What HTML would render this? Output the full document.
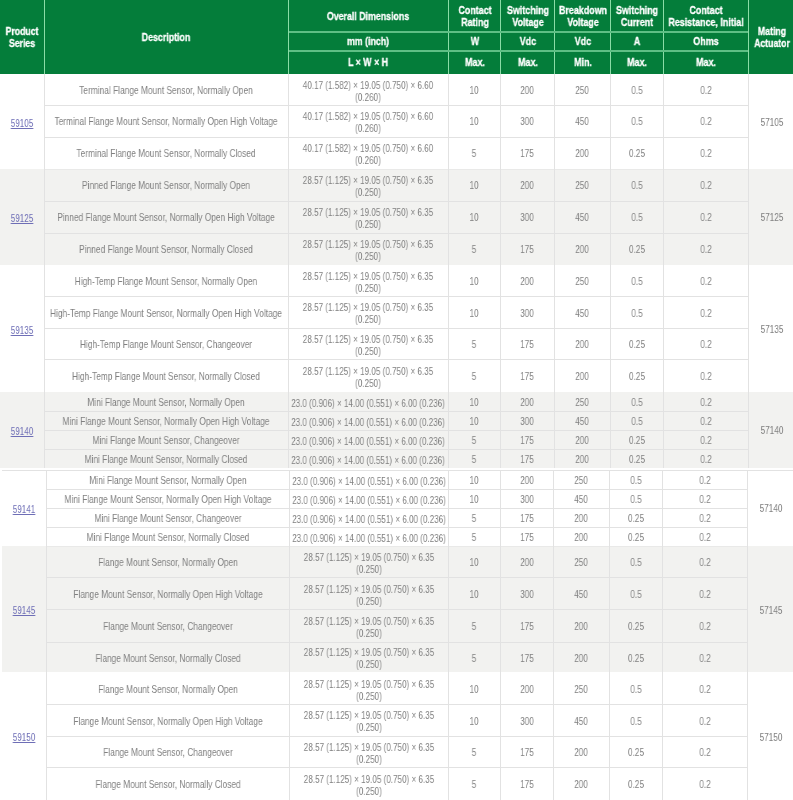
<!DOCTYPE html>
<html><head><meta charset="utf-8"><style>
html,body{margin:0;padding:0}
body{width:793px;height:800px;overflow:hidden;position:relative;background:#fff;font-family:"Liberation Sans",sans-serif}
body>div{position:absolute}
.t{text-align:center;white-space:nowrap;transform-origin:50% 50%;will-change:transform}
</style></head><body>
<div style="left:0px;top:0px;width:793px;height:74px;background:#047d3a"></div>
<div style="left:44px;top:0px;width:1px;height:74px;background:#8bdca6"></div>
<div style="left:288px;top:0px;width:1px;height:74px;background:#8bdca6"></div>
<div style="left:448px;top:0px;width:1px;height:74px;background:#8bdca6"></div>
<div style="left:500px;top:0px;width:1px;height:74px;background:#8bdca6"></div>
<div style="left:554px;top:0px;width:1px;height:74px;background:#8bdca6"></div>
<div style="left:610px;top:0px;width:1px;height:74px;background:#8bdca6"></div>
<div style="left:663px;top:0px;width:1px;height:74px;background:#8bdca6"></div>
<div style="left:748px;top:0px;width:1px;height:74px;background:#8bdca6"></div>
<div style="left:289px;top:31px;width:459px;height:2px;background:#5fbf85"></div>
<div style="left:289px;top:50px;width:459px;height:2px;background:#5fbf85"></div>
<div class="t" style="left:-178.00px;top:24.70px;width:400px;height:24.60px;font-size:10.5px;line-height:12.3px;color:#ffffff;transform:scaleX(0.83);font-weight:bold;-webkit-text-stroke:0.3px #fff">Product<br>Series</div>
<div class="t" style="left:-34.00px;top:30.85px;width:400px;height:12.30px;font-size:10.5px;line-height:12.3px;color:#ffffff;transform:scaleX(0.84);font-weight:bold;-webkit-text-stroke:0.3px #fff">Description</div>
<div class="t" style="left:168.00px;top:9.85px;width:400px;height:12.30px;font-size:10.5px;line-height:12.3px;color:#ffffff;transform:scaleX(0.84);font-weight:bold;-webkit-text-stroke:0.3px #fff">Overall Dimensions</div>
<div class="t" style="left:168.00px;top:34.85px;width:400px;height:12.30px;font-size:10.5px;line-height:12.3px;color:#ffffff;transform:scaleX(0.84);font-weight:bold;-webkit-text-stroke:0.3px #fff">mm (inch)</div>
<div class="t" style="left:168.00px;top:56.35px;width:400px;height:12.30px;font-size:10.5px;line-height:12.3px;color:#ffffff;transform:scaleX(0.84);font-weight:bold;-webkit-text-stroke:0.3px #fff">L × W × H</div>
<div class="t" style="left:274.50px;top:4.30px;width:400px;height:24.60px;font-size:10.5px;line-height:12.3px;color:#ffffff;transform:scaleX(0.85);font-weight:bold;-webkit-text-stroke:0.3px #fff">Contact<br>Rating</div>
<div class="t" style="left:274.50px;top:35.05px;width:400px;height:12.30px;font-size:10.5px;line-height:12.3px;color:#ffffff;transform:scaleX(0.85);font-weight:bold;-webkit-text-stroke:0.3px #fff">W</div>
<div class="t" style="left:274.50px;top:56.35px;width:400px;height:12.30px;font-size:10.5px;line-height:12.3px;color:#ffffff;transform:scaleX(0.85);font-weight:bold;-webkit-text-stroke:0.3px #fff">Max.</div>
<div class="t" style="left:327.50px;top:4.30px;width:400px;height:24.60px;font-size:10.5px;line-height:12.3px;color:#ffffff;transform:scaleX(0.85);font-weight:bold;-webkit-text-stroke:0.3px #fff">Switching<br>Voltage</div>
<div class="t" style="left:327.50px;top:35.05px;width:400px;height:12.30px;font-size:10.5px;line-height:12.3px;color:#ffffff;transform:scaleX(0.85);font-weight:bold;-webkit-text-stroke:0.3px #fff">Vdc</div>
<div class="t" style="left:327.50px;top:56.35px;width:400px;height:12.30px;font-size:10.5px;line-height:12.3px;color:#ffffff;transform:scaleX(0.85);font-weight:bold;-webkit-text-stroke:0.3px #fff">Max.</div>
<div class="t" style="left:382.50px;top:4.30px;width:400px;height:24.60px;font-size:10.5px;line-height:12.3px;color:#ffffff;transform:scaleX(0.85);font-weight:bold;-webkit-text-stroke:0.3px #fff">Breakdown<br>Voltage</div>
<div class="t" style="left:382.50px;top:35.05px;width:400px;height:12.30px;font-size:10.5px;line-height:12.3px;color:#ffffff;transform:scaleX(0.85);font-weight:bold;-webkit-text-stroke:0.3px #fff">Vdc</div>
<div class="t" style="left:382.50px;top:56.35px;width:400px;height:12.30px;font-size:10.5px;line-height:12.3px;color:#ffffff;transform:scaleX(0.85);font-weight:bold;-webkit-text-stroke:0.3px #fff">Min.</div>
<div class="t" style="left:437.00px;top:4.30px;width:400px;height:24.60px;font-size:10.5px;line-height:12.3px;color:#ffffff;transform:scaleX(0.85);font-weight:bold;-webkit-text-stroke:0.3px #fff">Switching<br>Current</div>
<div class="t" style="left:437.00px;top:35.05px;width:400px;height:12.30px;font-size:10.5px;line-height:12.3px;color:#ffffff;transform:scaleX(0.85);font-weight:bold;-webkit-text-stroke:0.3px #fff">A</div>
<div class="t" style="left:437.00px;top:56.35px;width:400px;height:12.30px;font-size:10.5px;line-height:12.3px;color:#ffffff;transform:scaleX(0.85);font-weight:bold;-webkit-text-stroke:0.3px #fff">Max.</div>
<div class="t" style="left:506.00px;top:4.30px;width:400px;height:24.60px;font-size:10.5px;line-height:12.3px;color:#ffffff;transform:scaleX(0.85);font-weight:bold;-webkit-text-stroke:0.3px #fff">Contact<br>Resistance, Initial</div>
<div class="t" style="left:506.00px;top:35.05px;width:400px;height:12.30px;font-size:10.5px;line-height:12.3px;color:#ffffff;transform:scaleX(0.85);font-weight:bold;-webkit-text-stroke:0.3px #fff">Ohms</div>
<div class="t" style="left:506.00px;top:56.35px;width:400px;height:12.30px;font-size:10.5px;line-height:12.3px;color:#ffffff;transform:scaleX(0.85);font-weight:bold;-webkit-text-stroke:0.3px #fff">Max.</div>
<div class="t" style="left:571.70px;top:24.70px;width:400px;height:24.60px;font-size:10.5px;line-height:12.3px;color:#ffffff;transform:scaleX(0.83);font-weight:bold;-webkit-text-stroke:0.3px #fff">Mating<br>Actuator</div>
<div style="left:0px;top:169px;width:793px;height:96px;background:#f2f2f0"></div>
<div style="left:0px;top:392px;width:793px;height:76px;background:#f2f2f0"></div>
<div style="left:2px;top:546px;width:791px;height:126px;background:#f2f2f0"></div>
<div style="left:44px;top:74px;width:1px;height:95px;background:#e2e2e2"></div>
<div style="left:288px;top:74px;width:1px;height:95px;background:#e2e2e2"></div>
<div style="left:448px;top:74px;width:1px;height:95px;background:#e2e2e2"></div>
<div style="left:500px;top:74px;width:1px;height:95px;background:#e2e2e2"></div>
<div style="left:554px;top:74px;width:1px;height:95px;background:#e2e2e2"></div>
<div style="left:610px;top:74px;width:1px;height:95px;background:#e2e2e2"></div>
<div style="left:663px;top:74px;width:1px;height:95px;background:#e2e2e2"></div>
<div style="left:748px;top:74px;width:1px;height:95px;background:#e2e2e2"></div>
<div style="left:44px;top:105px;width:704px;height:1px;background:#e2e2e2"></div>
<div style="left:44px;top:137px;width:704px;height:1px;background:#e2e2e2"></div>
<div style="left:44px;top:169px;width:704px;height:1px;background:#e9e9e8"></div>
<div class="t" style="left:-178.00px;top:117.72px;width:400px;height:11.55px;font-size:10.5px;line-height:11.55px;color:#6e6eb6;transform:scaleX(0.77);text-decoration:underline">59105</div>
<div class="t" style="left:571.50px;top:116.92px;width:400px;height:11.55px;font-size:10.5px;line-height:11.55px;color:#808080;transform:scaleX(0.78)">57105</div>
<div class="t" style="left:-34.00px;top:84.92px;width:400px;height:11.55px;font-size:10.5px;line-height:11.55px;color:#808080;transform:scaleX(0.795)">Terminal Flange Mount Sensor, Normally Open</div>
<div class="t" style="left:168.00px;top:78.70px;width:400px;height:24.00px;font-size:10.5px;line-height:12px;color:#808080;transform:scaleX(0.77)">40.17 (1.582) × 19.05 (0.750) × 6.60<br>(0.260)</div>
<div class="t" style="left:274.00px;top:84.92px;width:400px;height:11.55px;font-size:10.5px;line-height:11.55px;color:#808080;transform:scaleX(0.78)">10</div>
<div class="t" style="left:327.00px;top:84.92px;width:400px;height:11.55px;font-size:10.5px;line-height:11.55px;color:#808080;transform:scaleX(0.78)">200</div>
<div class="t" style="left:382.00px;top:84.92px;width:400px;height:11.55px;font-size:10.5px;line-height:11.55px;color:#808080;transform:scaleX(0.78)">250</div>
<div class="t" style="left:436.50px;top:84.92px;width:400px;height:11.55px;font-size:10.5px;line-height:11.55px;color:#808080;transform:scaleX(0.78)">0.5</div>
<div class="t" style="left:505.50px;top:84.92px;width:400px;height:11.55px;font-size:10.5px;line-height:11.55px;color:#808080;transform:scaleX(0.78)">0.2</div>
<div class="t" style="left:-34.00px;top:116.42px;width:400px;height:11.55px;font-size:10.5px;line-height:11.55px;color:#808080;transform:scaleX(0.795)">Terminal Flange Mount Sensor, Normally Open High Voltage</div>
<div class="t" style="left:168.00px;top:110.20px;width:400px;height:24.00px;font-size:10.5px;line-height:12px;color:#808080;transform:scaleX(0.77)">40.17 (1.582) × 19.05 (0.750) × 6.60<br>(0.260)</div>
<div class="t" style="left:274.00px;top:116.42px;width:400px;height:11.55px;font-size:10.5px;line-height:11.55px;color:#808080;transform:scaleX(0.78)">10</div>
<div class="t" style="left:327.00px;top:116.42px;width:400px;height:11.55px;font-size:10.5px;line-height:11.55px;color:#808080;transform:scaleX(0.78)">300</div>
<div class="t" style="left:382.00px;top:116.42px;width:400px;height:11.55px;font-size:10.5px;line-height:11.55px;color:#808080;transform:scaleX(0.78)">450</div>
<div class="t" style="left:436.50px;top:116.42px;width:400px;height:11.55px;font-size:10.5px;line-height:11.55px;color:#808080;transform:scaleX(0.78)">0.5</div>
<div class="t" style="left:505.50px;top:116.42px;width:400px;height:11.55px;font-size:10.5px;line-height:11.55px;color:#808080;transform:scaleX(0.78)">0.2</div>
<div class="t" style="left:-34.00px;top:148.42px;width:400px;height:11.55px;font-size:10.5px;line-height:11.55px;color:#808080;transform:scaleX(0.795)">Terminal Flange Mount Sensor, Normally Closed</div>
<div class="t" style="left:168.00px;top:142.20px;width:400px;height:24.00px;font-size:10.5px;line-height:12px;color:#808080;transform:scaleX(0.77)">40.17 (1.582) × 19.05 (0.750) × 6.60<br>(0.260)</div>
<div class="t" style="left:274.00px;top:148.42px;width:400px;height:11.55px;font-size:10.5px;line-height:11.55px;color:#808080;transform:scaleX(0.78)">5</div>
<div class="t" style="left:327.00px;top:148.42px;width:400px;height:11.55px;font-size:10.5px;line-height:11.55px;color:#808080;transform:scaleX(0.78)">175</div>
<div class="t" style="left:382.00px;top:148.42px;width:400px;height:11.55px;font-size:10.5px;line-height:11.55px;color:#808080;transform:scaleX(0.78)">200</div>
<div class="t" style="left:436.50px;top:148.42px;width:400px;height:11.55px;font-size:10.5px;line-height:11.55px;color:#808080;transform:scaleX(0.78)">0.25</div>
<div class="t" style="left:505.50px;top:148.42px;width:400px;height:11.55px;font-size:10.5px;line-height:11.55px;color:#808080;transform:scaleX(0.78)">0.2</div>
<div style="left:44px;top:169px;width:1px;height:96px;background:#e2e2e2"></div>
<div style="left:288px;top:169px;width:1px;height:96px;background:#e2e2e2"></div>
<div style="left:448px;top:169px;width:1px;height:96px;background:#e2e2e2"></div>
<div style="left:500px;top:169px;width:1px;height:96px;background:#e2e2e2"></div>
<div style="left:554px;top:169px;width:1px;height:96px;background:#e2e2e2"></div>
<div style="left:610px;top:169px;width:1px;height:96px;background:#e2e2e2"></div>
<div style="left:663px;top:169px;width:1px;height:96px;background:#e2e2e2"></div>
<div style="left:748px;top:169px;width:1px;height:96px;background:#e2e2e2"></div>
<div style="left:44px;top:201px;width:704px;height:1px;background:#e2e2e2"></div>
<div style="left:44px;top:233px;width:704px;height:1px;background:#e2e2e2"></div>
<div class="t" style="left:-178.00px;top:213.22px;width:400px;height:11.55px;font-size:10.5px;line-height:11.55px;color:#6e6eb6;transform:scaleX(0.77);text-decoration:underline">59125</div>
<div class="t" style="left:571.50px;top:212.42px;width:400px;height:11.55px;font-size:10.5px;line-height:11.55px;color:#808080;transform:scaleX(0.78)">57125</div>
<div class="t" style="left:-34.00px;top:180.42px;width:400px;height:11.55px;font-size:10.5px;line-height:11.55px;color:#808080;transform:scaleX(0.795)">Pinned Flange Mount Sensor, Normally Open</div>
<div class="t" style="left:168.00px;top:174.20px;width:400px;height:24.00px;font-size:10.5px;line-height:12px;color:#808080;transform:scaleX(0.77)">28.57 (1.125) × 19.05 (0.750) × 6.35<br>(0.250)</div>
<div class="t" style="left:274.00px;top:180.42px;width:400px;height:11.55px;font-size:10.5px;line-height:11.55px;color:#808080;transform:scaleX(0.78)">10</div>
<div class="t" style="left:327.00px;top:180.42px;width:400px;height:11.55px;font-size:10.5px;line-height:11.55px;color:#808080;transform:scaleX(0.78)">200</div>
<div class="t" style="left:382.00px;top:180.42px;width:400px;height:11.55px;font-size:10.5px;line-height:11.55px;color:#808080;transform:scaleX(0.78)">250</div>
<div class="t" style="left:436.50px;top:180.42px;width:400px;height:11.55px;font-size:10.5px;line-height:11.55px;color:#808080;transform:scaleX(0.78)">0.5</div>
<div class="t" style="left:505.50px;top:180.42px;width:400px;height:11.55px;font-size:10.5px;line-height:11.55px;color:#808080;transform:scaleX(0.78)">0.2</div>
<div class="t" style="left:-34.00px;top:212.42px;width:400px;height:11.55px;font-size:10.5px;line-height:11.55px;color:#808080;transform:scaleX(0.795)">Pinned Flange Mount Sensor, Normally Open High Voltage</div>
<div class="t" style="left:168.00px;top:206.20px;width:400px;height:24.00px;font-size:10.5px;line-height:12px;color:#808080;transform:scaleX(0.77)">28.57 (1.125) × 19.05 (0.750) × 6.35<br>(0.250)</div>
<div class="t" style="left:274.00px;top:212.42px;width:400px;height:11.55px;font-size:10.5px;line-height:11.55px;color:#808080;transform:scaleX(0.78)">10</div>
<div class="t" style="left:327.00px;top:212.42px;width:400px;height:11.55px;font-size:10.5px;line-height:11.55px;color:#808080;transform:scaleX(0.78)">300</div>
<div class="t" style="left:382.00px;top:212.42px;width:400px;height:11.55px;font-size:10.5px;line-height:11.55px;color:#808080;transform:scaleX(0.78)">450</div>
<div class="t" style="left:436.50px;top:212.42px;width:400px;height:11.55px;font-size:10.5px;line-height:11.55px;color:#808080;transform:scaleX(0.78)">0.5</div>
<div class="t" style="left:505.50px;top:212.42px;width:400px;height:11.55px;font-size:10.5px;line-height:11.55px;color:#808080;transform:scaleX(0.78)">0.2</div>
<div class="t" style="left:-34.00px;top:244.42px;width:400px;height:11.55px;font-size:10.5px;line-height:11.55px;color:#808080;transform:scaleX(0.795)">Pinned Flange Mount Sensor, Normally Closed</div>
<div class="t" style="left:168.00px;top:238.20px;width:400px;height:24.00px;font-size:10.5px;line-height:12px;color:#808080;transform:scaleX(0.77)">28.57 (1.125) × 19.05 (0.750) × 6.35<br>(0.250)</div>
<div class="t" style="left:274.00px;top:244.42px;width:400px;height:11.55px;font-size:10.5px;line-height:11.55px;color:#808080;transform:scaleX(0.78)">5</div>
<div class="t" style="left:327.00px;top:244.42px;width:400px;height:11.55px;font-size:10.5px;line-height:11.55px;color:#808080;transform:scaleX(0.78)">175</div>
<div class="t" style="left:382.00px;top:244.42px;width:400px;height:11.55px;font-size:10.5px;line-height:11.55px;color:#808080;transform:scaleX(0.78)">200</div>
<div class="t" style="left:436.50px;top:244.42px;width:400px;height:11.55px;font-size:10.5px;line-height:11.55px;color:#808080;transform:scaleX(0.78)">0.25</div>
<div class="t" style="left:505.50px;top:244.42px;width:400px;height:11.55px;font-size:10.5px;line-height:11.55px;color:#808080;transform:scaleX(0.78)">0.2</div>
<div style="left:44px;top:265px;width:1px;height:127px;background:#e2e2e2"></div>
<div style="left:288px;top:265px;width:1px;height:127px;background:#e2e2e2"></div>
<div style="left:448px;top:265px;width:1px;height:127px;background:#e2e2e2"></div>
<div style="left:500px;top:265px;width:1px;height:127px;background:#e2e2e2"></div>
<div style="left:554px;top:265px;width:1px;height:127px;background:#e2e2e2"></div>
<div style="left:610px;top:265px;width:1px;height:127px;background:#e2e2e2"></div>
<div style="left:663px;top:265px;width:1px;height:127px;background:#e2e2e2"></div>
<div style="left:748px;top:265px;width:1px;height:127px;background:#e2e2e2"></div>
<div style="left:44px;top:296px;width:704px;height:1px;background:#e2e2e2"></div>
<div style="left:44px;top:328px;width:704px;height:1px;background:#e2e2e2"></div>
<div style="left:44px;top:359px;width:704px;height:1px;background:#e2e2e2"></div>
<div class="t" style="left:-178.00px;top:324.73px;width:400px;height:11.55px;font-size:10.5px;line-height:11.55px;color:#6e6eb6;transform:scaleX(0.77);text-decoration:underline">59135</div>
<div class="t" style="left:571.50px;top:323.93px;width:400px;height:11.55px;font-size:10.5px;line-height:11.55px;color:#808080;transform:scaleX(0.78)">57135</div>
<div class="t" style="left:-34.00px;top:276.18px;width:400px;height:11.55px;font-size:10.5px;line-height:11.55px;color:#808080;transform:scaleX(0.795)">High-Temp Flange Mount Sensor, Normally Open</div>
<div class="t" style="left:168.00px;top:269.95px;width:400px;height:24.00px;font-size:10.5px;line-height:12px;color:#808080;transform:scaleX(0.77)">28.57 (1.125) × 19.05 (0.750) × 6.35<br>(0.250)</div>
<div class="t" style="left:274.00px;top:276.18px;width:400px;height:11.55px;font-size:10.5px;line-height:11.55px;color:#808080;transform:scaleX(0.78)">10</div>
<div class="t" style="left:327.00px;top:276.18px;width:400px;height:11.55px;font-size:10.5px;line-height:11.55px;color:#808080;transform:scaleX(0.78)">200</div>
<div class="t" style="left:382.00px;top:276.18px;width:400px;height:11.55px;font-size:10.5px;line-height:11.55px;color:#808080;transform:scaleX(0.78)">250</div>
<div class="t" style="left:436.50px;top:276.18px;width:400px;height:11.55px;font-size:10.5px;line-height:11.55px;color:#808080;transform:scaleX(0.78)">0.5</div>
<div class="t" style="left:505.50px;top:276.18px;width:400px;height:11.55px;font-size:10.5px;line-height:11.55px;color:#808080;transform:scaleX(0.78)">0.2</div>
<div class="t" style="left:-34.00px;top:307.68px;width:400px;height:11.55px;font-size:10.5px;line-height:11.55px;color:#808080;transform:scaleX(0.795)">High-Temp Flange Mount Sensor, Normally Open High Voltage</div>
<div class="t" style="left:168.00px;top:301.45px;width:400px;height:24.00px;font-size:10.5px;line-height:12px;color:#808080;transform:scaleX(0.77)">28.57 (1.125) × 19.05 (0.750) × 6.35<br>(0.250)</div>
<div class="t" style="left:274.00px;top:307.68px;width:400px;height:11.55px;font-size:10.5px;line-height:11.55px;color:#808080;transform:scaleX(0.78)">10</div>
<div class="t" style="left:327.00px;top:307.68px;width:400px;height:11.55px;font-size:10.5px;line-height:11.55px;color:#808080;transform:scaleX(0.78)">300</div>
<div class="t" style="left:382.00px;top:307.68px;width:400px;height:11.55px;font-size:10.5px;line-height:11.55px;color:#808080;transform:scaleX(0.78)">450</div>
<div class="t" style="left:436.50px;top:307.68px;width:400px;height:11.55px;font-size:10.5px;line-height:11.55px;color:#808080;transform:scaleX(0.78)">0.5</div>
<div class="t" style="left:505.50px;top:307.68px;width:400px;height:11.55px;font-size:10.5px;line-height:11.55px;color:#808080;transform:scaleX(0.78)">0.2</div>
<div class="t" style="left:-34.00px;top:339.18px;width:400px;height:11.55px;font-size:10.5px;line-height:11.55px;color:#808080;transform:scaleX(0.795)">High-Temp Flange Mount Sensor, Changeover</div>
<div class="t" style="left:168.00px;top:332.95px;width:400px;height:24.00px;font-size:10.5px;line-height:12px;color:#808080;transform:scaleX(0.77)">28.57 (1.125) × 19.05 (0.750) × 6.35<br>(0.250)</div>
<div class="t" style="left:274.00px;top:339.18px;width:400px;height:11.55px;font-size:10.5px;line-height:11.55px;color:#808080;transform:scaleX(0.78)">5</div>
<div class="t" style="left:327.00px;top:339.18px;width:400px;height:11.55px;font-size:10.5px;line-height:11.55px;color:#808080;transform:scaleX(0.78)">175</div>
<div class="t" style="left:382.00px;top:339.18px;width:400px;height:11.55px;font-size:10.5px;line-height:11.55px;color:#808080;transform:scaleX(0.78)">200</div>
<div class="t" style="left:436.50px;top:339.18px;width:400px;height:11.55px;font-size:10.5px;line-height:11.55px;color:#808080;transform:scaleX(0.78)">0.25</div>
<div class="t" style="left:505.50px;top:339.18px;width:400px;height:11.55px;font-size:10.5px;line-height:11.55px;color:#808080;transform:scaleX(0.78)">0.2</div>
<div class="t" style="left:-34.00px;top:371.18px;width:400px;height:11.55px;font-size:10.5px;line-height:11.55px;color:#808080;transform:scaleX(0.795)">High-Temp Flange Mount Sensor, Normally Closed</div>
<div class="t" style="left:168.00px;top:364.95px;width:400px;height:24.00px;font-size:10.5px;line-height:12px;color:#808080;transform:scaleX(0.77)">28.57 (1.125) × 19.05 (0.750) × 6.35<br>(0.250)</div>
<div class="t" style="left:274.00px;top:371.18px;width:400px;height:11.55px;font-size:10.5px;line-height:11.55px;color:#808080;transform:scaleX(0.78)">5</div>
<div class="t" style="left:327.00px;top:371.18px;width:400px;height:11.55px;font-size:10.5px;line-height:11.55px;color:#808080;transform:scaleX(0.78)">175</div>
<div class="t" style="left:382.00px;top:371.18px;width:400px;height:11.55px;font-size:10.5px;line-height:11.55px;color:#808080;transform:scaleX(0.78)">200</div>
<div class="t" style="left:436.50px;top:371.18px;width:400px;height:11.55px;font-size:10.5px;line-height:11.55px;color:#808080;transform:scaleX(0.78)">0.25</div>
<div class="t" style="left:505.50px;top:371.18px;width:400px;height:11.55px;font-size:10.5px;line-height:11.55px;color:#808080;transform:scaleX(0.78)">0.2</div>
<div style="left:44px;top:392px;width:1px;height:76px;background:#e2e2e2"></div>
<div style="left:288px;top:392px;width:1px;height:76px;background:#e2e2e2"></div>
<div style="left:448px;top:392px;width:1px;height:76px;background:#e2e2e2"></div>
<div style="left:500px;top:392px;width:1px;height:76px;background:#e2e2e2"></div>
<div style="left:554px;top:392px;width:1px;height:76px;background:#e2e2e2"></div>
<div style="left:610px;top:392px;width:1px;height:76px;background:#e2e2e2"></div>
<div style="left:663px;top:392px;width:1px;height:76px;background:#e2e2e2"></div>
<div style="left:748px;top:392px;width:1px;height:76px;background:#e2e2e2"></div>
<div style="left:44px;top:411px;width:704px;height:1px;background:#e2e2e2"></div>
<div style="left:44px;top:430px;width:704px;height:1px;background:#e2e2e2"></div>
<div style="left:44px;top:449px;width:704px;height:1px;background:#e2e2e2"></div>
<div class="t" style="left:-178.00px;top:426.23px;width:400px;height:11.55px;font-size:10.5px;line-height:11.55px;color:#6e6eb6;transform:scaleX(0.77);text-decoration:underline">59140</div>
<div class="t" style="left:571.50px;top:425.43px;width:400px;height:11.55px;font-size:10.5px;line-height:11.55px;color:#808080;transform:scaleX(0.78)">57140</div>
<div class="t" style="left:-34.00px;top:396.93px;width:400px;height:11.55px;font-size:10.5px;line-height:11.55px;color:#808080;transform:scaleX(0.795)">Mini Flange Mount Sensor, Normally Open</div>
<div class="t" style="left:168.00px;top:396.70px;width:400px;height:12.00px;font-size:10.5px;line-height:12px;color:#808080;transform:scaleX(0.77)">23.0 (0.906) × 14.00 (0.551) × 6.00 (0.236)</div>
<div class="t" style="left:274.00px;top:396.93px;width:400px;height:11.55px;font-size:10.5px;line-height:11.55px;color:#808080;transform:scaleX(0.78)">10</div>
<div class="t" style="left:327.00px;top:396.93px;width:400px;height:11.55px;font-size:10.5px;line-height:11.55px;color:#808080;transform:scaleX(0.78)">200</div>
<div class="t" style="left:382.00px;top:396.93px;width:400px;height:11.55px;font-size:10.5px;line-height:11.55px;color:#808080;transform:scaleX(0.78)">250</div>
<div class="t" style="left:436.50px;top:396.93px;width:400px;height:11.55px;font-size:10.5px;line-height:11.55px;color:#808080;transform:scaleX(0.78)">0.5</div>
<div class="t" style="left:505.50px;top:396.93px;width:400px;height:11.55px;font-size:10.5px;line-height:11.55px;color:#808080;transform:scaleX(0.78)">0.2</div>
<div class="t" style="left:-34.00px;top:415.93px;width:400px;height:11.55px;font-size:10.5px;line-height:11.55px;color:#808080;transform:scaleX(0.795)">Mini Flange Mount Sensor, Normally Open High Voltage</div>
<div class="t" style="left:168.00px;top:415.70px;width:400px;height:12.00px;font-size:10.5px;line-height:12px;color:#808080;transform:scaleX(0.77)">23.0 (0.906) × 14.00 (0.551) × 6.00 (0.236)</div>
<div class="t" style="left:274.00px;top:415.93px;width:400px;height:11.55px;font-size:10.5px;line-height:11.55px;color:#808080;transform:scaleX(0.78)">10</div>
<div class="t" style="left:327.00px;top:415.93px;width:400px;height:11.55px;font-size:10.5px;line-height:11.55px;color:#808080;transform:scaleX(0.78)">300</div>
<div class="t" style="left:382.00px;top:415.93px;width:400px;height:11.55px;font-size:10.5px;line-height:11.55px;color:#808080;transform:scaleX(0.78)">450</div>
<div class="t" style="left:436.50px;top:415.93px;width:400px;height:11.55px;font-size:10.5px;line-height:11.55px;color:#808080;transform:scaleX(0.78)">0.5</div>
<div class="t" style="left:505.50px;top:415.93px;width:400px;height:11.55px;font-size:10.5px;line-height:11.55px;color:#808080;transform:scaleX(0.78)">0.2</div>
<div class="t" style="left:-34.00px;top:435.18px;width:400px;height:11.55px;font-size:10.5px;line-height:11.55px;color:#808080;transform:scaleX(0.795)">Mini Flange Mount Sensor, Changeover</div>
<div class="t" style="left:168.00px;top:434.95px;width:400px;height:12.00px;font-size:10.5px;line-height:12px;color:#808080;transform:scaleX(0.77)">23.0 (0.906) × 14.00 (0.551) × 6.00 (0.236)</div>
<div class="t" style="left:274.00px;top:435.18px;width:400px;height:11.55px;font-size:10.5px;line-height:11.55px;color:#808080;transform:scaleX(0.78)">5</div>
<div class="t" style="left:327.00px;top:435.18px;width:400px;height:11.55px;font-size:10.5px;line-height:11.55px;color:#808080;transform:scaleX(0.78)">175</div>
<div class="t" style="left:382.00px;top:435.18px;width:400px;height:11.55px;font-size:10.5px;line-height:11.55px;color:#808080;transform:scaleX(0.78)">200</div>
<div class="t" style="left:436.50px;top:435.18px;width:400px;height:11.55px;font-size:10.5px;line-height:11.55px;color:#808080;transform:scaleX(0.78)">0.25</div>
<div class="t" style="left:505.50px;top:435.18px;width:400px;height:11.55px;font-size:10.5px;line-height:11.55px;color:#808080;transform:scaleX(0.78)">0.2</div>
<div class="t" style="left:-34.00px;top:454.18px;width:400px;height:11.55px;font-size:10.5px;line-height:11.55px;color:#808080;transform:scaleX(0.795)">Mini Flange Mount Sensor, Normally Closed</div>
<div class="t" style="left:168.00px;top:453.95px;width:400px;height:12.00px;font-size:10.5px;line-height:12px;color:#808080;transform:scaleX(0.77)">23.0 (0.906) × 14.00 (0.551) × 6.00 (0.236)</div>
<div class="t" style="left:274.00px;top:454.18px;width:400px;height:11.55px;font-size:10.5px;line-height:11.55px;color:#808080;transform:scaleX(0.78)">5</div>
<div class="t" style="left:327.00px;top:454.18px;width:400px;height:11.55px;font-size:10.5px;line-height:11.55px;color:#808080;transform:scaleX(0.78)">175</div>
<div class="t" style="left:382.00px;top:454.18px;width:400px;height:11.55px;font-size:10.5px;line-height:11.55px;color:#808080;transform:scaleX(0.78)">200</div>
<div class="t" style="left:436.50px;top:454.18px;width:400px;height:11.55px;font-size:10.5px;line-height:11.55px;color:#808080;transform:scaleX(0.78)">0.25</div>
<div class="t" style="left:505.50px;top:454.18px;width:400px;height:11.55px;font-size:10.5px;line-height:11.55px;color:#808080;transform:scaleX(0.78)">0.2</div>
<div style="left:46px;top:470px;width:1px;height:76px;background:#e2e2e2"></div>
<div style="left:289px;top:470px;width:1px;height:76px;background:#e2e2e2"></div>
<div style="left:448px;top:470px;width:1px;height:76px;background:#e2e2e2"></div>
<div style="left:500px;top:470px;width:1px;height:76px;background:#e2e2e2"></div>
<div style="left:553px;top:470px;width:1px;height:76px;background:#e2e2e2"></div>
<div style="left:609px;top:470px;width:1px;height:76px;background:#e2e2e2"></div>
<div style="left:662px;top:470px;width:1px;height:76px;background:#e2e2e2"></div>
<div style="left:747px;top:470px;width:1px;height:76px;background:#e2e2e2"></div>
<div style="left:46px;top:489px;width:701px;height:1px;background:#e2e2e2"></div>
<div style="left:46px;top:508px;width:701px;height:1px;background:#e2e2e2"></div>
<div style="left:46px;top:527px;width:701px;height:1px;background:#e2e2e2"></div>
<div style="left:46px;top:546px;width:701px;height:1px;background:#e9e9e8"></div>
<div class="t" style="left:-176.00px;top:504.23px;width:400px;height:11.55px;font-size:10.5px;line-height:11.55px;color:#6e6eb6;transform:scaleX(0.77);text-decoration:underline">59141</div>
<div class="t" style="left:571.00px;top:503.43px;width:400px;height:11.55px;font-size:10.5px;line-height:11.55px;color:#808080;transform:scaleX(0.78)">57140</div>
<div class="t" style="left:-32.50px;top:474.93px;width:400px;height:11.55px;font-size:10.5px;line-height:11.55px;color:#808080;transform:scaleX(0.795)">Mini Flange Mount Sensor, Normally Open</div>
<div class="t" style="left:168.50px;top:474.70px;width:400px;height:12.00px;font-size:10.5px;line-height:12px;color:#808080;transform:scaleX(0.77)">23.0 (0.906) × 14.00 (0.551) × 6.00 (0.236)</div>
<div class="t" style="left:274.00px;top:474.93px;width:400px;height:11.55px;font-size:10.5px;line-height:11.55px;color:#808080;transform:scaleX(0.78)">10</div>
<div class="t" style="left:326.50px;top:474.93px;width:400px;height:11.55px;font-size:10.5px;line-height:11.55px;color:#808080;transform:scaleX(0.78)">200</div>
<div class="t" style="left:381.00px;top:474.93px;width:400px;height:11.55px;font-size:10.5px;line-height:11.55px;color:#808080;transform:scaleX(0.78)">250</div>
<div class="t" style="left:435.50px;top:474.93px;width:400px;height:11.55px;font-size:10.5px;line-height:11.55px;color:#808080;transform:scaleX(0.78)">0.5</div>
<div class="t" style="left:504.50px;top:474.93px;width:400px;height:11.55px;font-size:10.5px;line-height:11.55px;color:#808080;transform:scaleX(0.78)">0.2</div>
<div class="t" style="left:-32.50px;top:494.18px;width:400px;height:11.55px;font-size:10.5px;line-height:11.55px;color:#808080;transform:scaleX(0.795)">Mini Flange Mount Sensor, Normally Open High Voltage</div>
<div class="t" style="left:168.50px;top:493.95px;width:400px;height:12.00px;font-size:10.5px;line-height:12px;color:#808080;transform:scaleX(0.77)">23.0 (0.906) × 14.00 (0.551) × 6.00 (0.236)</div>
<div class="t" style="left:274.00px;top:494.18px;width:400px;height:11.55px;font-size:10.5px;line-height:11.55px;color:#808080;transform:scaleX(0.78)">10</div>
<div class="t" style="left:326.50px;top:494.18px;width:400px;height:11.55px;font-size:10.5px;line-height:11.55px;color:#808080;transform:scaleX(0.78)">300</div>
<div class="t" style="left:381.00px;top:494.18px;width:400px;height:11.55px;font-size:10.5px;line-height:11.55px;color:#808080;transform:scaleX(0.78)">450</div>
<div class="t" style="left:435.50px;top:494.18px;width:400px;height:11.55px;font-size:10.5px;line-height:11.55px;color:#808080;transform:scaleX(0.78)">0.5</div>
<div class="t" style="left:504.50px;top:494.18px;width:400px;height:11.55px;font-size:10.5px;line-height:11.55px;color:#808080;transform:scaleX(0.78)">0.2</div>
<div class="t" style="left:-32.50px;top:513.43px;width:400px;height:11.55px;font-size:10.5px;line-height:11.55px;color:#808080;transform:scaleX(0.795)">Mini Flange Mount Sensor, Changeover</div>
<div class="t" style="left:168.50px;top:513.20px;width:400px;height:12.00px;font-size:10.5px;line-height:12px;color:#808080;transform:scaleX(0.77)">23.0 (0.906) × 14.00 (0.551) × 6.00 (0.236)</div>
<div class="t" style="left:274.00px;top:513.43px;width:400px;height:11.55px;font-size:10.5px;line-height:11.55px;color:#808080;transform:scaleX(0.78)">5</div>
<div class="t" style="left:326.50px;top:513.43px;width:400px;height:11.55px;font-size:10.5px;line-height:11.55px;color:#808080;transform:scaleX(0.78)">175</div>
<div class="t" style="left:381.00px;top:513.43px;width:400px;height:11.55px;font-size:10.5px;line-height:11.55px;color:#808080;transform:scaleX(0.78)">200</div>
<div class="t" style="left:435.50px;top:513.43px;width:400px;height:11.55px;font-size:10.5px;line-height:11.55px;color:#808080;transform:scaleX(0.78)">0.25</div>
<div class="t" style="left:504.50px;top:513.43px;width:400px;height:11.55px;font-size:10.5px;line-height:11.55px;color:#808080;transform:scaleX(0.78)">0.2</div>
<div class="t" style="left:-32.50px;top:532.18px;width:400px;height:11.55px;font-size:10.5px;line-height:11.55px;color:#808080;transform:scaleX(0.795)">Mini Flange Mount Sensor, Normally Closed</div>
<div class="t" style="left:168.50px;top:531.95px;width:400px;height:12.00px;font-size:10.5px;line-height:12px;color:#808080;transform:scaleX(0.77)">23.0 (0.906) × 14.00 (0.551) × 6.00 (0.236)</div>
<div class="t" style="left:274.00px;top:532.18px;width:400px;height:11.55px;font-size:10.5px;line-height:11.55px;color:#808080;transform:scaleX(0.78)">5</div>
<div class="t" style="left:326.50px;top:532.18px;width:400px;height:11.55px;font-size:10.5px;line-height:11.55px;color:#808080;transform:scaleX(0.78)">175</div>
<div class="t" style="left:381.00px;top:532.18px;width:400px;height:11.55px;font-size:10.5px;line-height:11.55px;color:#808080;transform:scaleX(0.78)">200</div>
<div class="t" style="left:435.50px;top:532.18px;width:400px;height:11.55px;font-size:10.5px;line-height:11.55px;color:#808080;transform:scaleX(0.78)">0.25</div>
<div class="t" style="left:504.50px;top:532.18px;width:400px;height:11.55px;font-size:10.5px;line-height:11.55px;color:#808080;transform:scaleX(0.78)">0.2</div>
<div style="left:46px;top:546px;width:1px;height:126px;background:#e2e2e2"></div>
<div style="left:289px;top:546px;width:1px;height:126px;background:#e2e2e2"></div>
<div style="left:448px;top:546px;width:1px;height:126px;background:#e2e2e2"></div>
<div style="left:500px;top:546px;width:1px;height:126px;background:#e2e2e2"></div>
<div style="left:553px;top:546px;width:1px;height:126px;background:#e2e2e2"></div>
<div style="left:609px;top:546px;width:1px;height:126px;background:#e2e2e2"></div>
<div style="left:662px;top:546px;width:1px;height:126px;background:#e2e2e2"></div>
<div style="left:747px;top:546px;width:1px;height:126px;background:#e2e2e2"></div>
<div style="left:46px;top:577px;width:701px;height:1px;background:#e2e2e2"></div>
<div style="left:46px;top:609px;width:701px;height:1px;background:#e2e2e2"></div>
<div style="left:46px;top:642px;width:701px;height:1px;background:#e2e2e2"></div>
<div class="t" style="left:-176.00px;top:605.48px;width:400px;height:11.55px;font-size:10.5px;line-height:11.55px;color:#6e6eb6;transform:scaleX(0.77);text-decoration:underline">59145</div>
<div class="t" style="left:571.00px;top:604.68px;width:400px;height:11.55px;font-size:10.5px;line-height:11.55px;color:#808080;transform:scaleX(0.78)">57145</div>
<div class="t" style="left:-32.50px;top:557.18px;width:400px;height:11.55px;font-size:10.5px;line-height:11.55px;color:#808080;transform:scaleX(0.795)">Flange Mount Sensor, Normally Open</div>
<div class="t" style="left:168.50px;top:550.95px;width:400px;height:24.00px;font-size:10.5px;line-height:12px;color:#808080;transform:scaleX(0.77)">28.57 (1.125) × 19.05 (0.750) × 6.35<br>(0.250)</div>
<div class="t" style="left:274.00px;top:557.18px;width:400px;height:11.55px;font-size:10.5px;line-height:11.55px;color:#808080;transform:scaleX(0.78)">10</div>
<div class="t" style="left:326.50px;top:557.18px;width:400px;height:11.55px;font-size:10.5px;line-height:11.55px;color:#808080;transform:scaleX(0.78)">200</div>
<div class="t" style="left:381.00px;top:557.18px;width:400px;height:11.55px;font-size:10.5px;line-height:11.55px;color:#808080;transform:scaleX(0.78)">250</div>
<div class="t" style="left:435.50px;top:557.18px;width:400px;height:11.55px;font-size:10.5px;line-height:11.55px;color:#808080;transform:scaleX(0.78)">0.5</div>
<div class="t" style="left:504.50px;top:557.18px;width:400px;height:11.55px;font-size:10.5px;line-height:11.55px;color:#808080;transform:scaleX(0.78)">0.2</div>
<div class="t" style="left:-32.50px;top:588.93px;width:400px;height:11.55px;font-size:10.5px;line-height:11.55px;color:#808080;transform:scaleX(0.795)">Flange Mount Sensor, Normally Open High Voltage</div>
<div class="t" style="left:168.50px;top:582.70px;width:400px;height:24.00px;font-size:10.5px;line-height:12px;color:#808080;transform:scaleX(0.77)">28.57 (1.125) × 19.05 (0.750) × 6.35<br>(0.250)</div>
<div class="t" style="left:274.00px;top:588.93px;width:400px;height:11.55px;font-size:10.5px;line-height:11.55px;color:#808080;transform:scaleX(0.78)">10</div>
<div class="t" style="left:326.50px;top:588.93px;width:400px;height:11.55px;font-size:10.5px;line-height:11.55px;color:#808080;transform:scaleX(0.78)">300</div>
<div class="t" style="left:381.00px;top:588.93px;width:400px;height:11.55px;font-size:10.5px;line-height:11.55px;color:#808080;transform:scaleX(0.78)">450</div>
<div class="t" style="left:435.50px;top:588.93px;width:400px;height:11.55px;font-size:10.5px;line-height:11.55px;color:#808080;transform:scaleX(0.78)">0.5</div>
<div class="t" style="left:504.50px;top:588.93px;width:400px;height:11.55px;font-size:10.5px;line-height:11.55px;color:#808080;transform:scaleX(0.78)">0.2</div>
<div class="t" style="left:-32.50px;top:621.18px;width:400px;height:11.55px;font-size:10.5px;line-height:11.55px;color:#808080;transform:scaleX(0.795)">Flange Mount Sensor, Changeover</div>
<div class="t" style="left:168.50px;top:614.95px;width:400px;height:24.00px;font-size:10.5px;line-height:12px;color:#808080;transform:scaleX(0.77)">28.57 (1.125) × 19.05 (0.750) × 6.35<br>(0.250)</div>
<div class="t" style="left:274.00px;top:621.18px;width:400px;height:11.55px;font-size:10.5px;line-height:11.55px;color:#808080;transform:scaleX(0.78)">5</div>
<div class="t" style="left:326.50px;top:621.18px;width:400px;height:11.55px;font-size:10.5px;line-height:11.55px;color:#808080;transform:scaleX(0.78)">175</div>
<div class="t" style="left:381.00px;top:621.18px;width:400px;height:11.55px;font-size:10.5px;line-height:11.55px;color:#808080;transform:scaleX(0.78)">200</div>
<div class="t" style="left:435.50px;top:621.18px;width:400px;height:11.55px;font-size:10.5px;line-height:11.55px;color:#808080;transform:scaleX(0.78)">0.25</div>
<div class="t" style="left:504.50px;top:621.18px;width:400px;height:11.55px;font-size:10.5px;line-height:11.55px;color:#808080;transform:scaleX(0.78)">0.2</div>
<div class="t" style="left:-32.50px;top:652.68px;width:400px;height:11.55px;font-size:10.5px;line-height:11.55px;color:#808080;transform:scaleX(0.795)">Flange Mount Sensor, Normally Closed</div>
<div class="t" style="left:168.50px;top:646.45px;width:400px;height:24.00px;font-size:10.5px;line-height:12px;color:#808080;transform:scaleX(0.77)">28.57 (1.125) × 19.05 (0.750) × 6.35<br>(0.250)</div>
<div class="t" style="left:274.00px;top:652.68px;width:400px;height:11.55px;font-size:10.5px;line-height:11.55px;color:#808080;transform:scaleX(0.78)">5</div>
<div class="t" style="left:326.50px;top:652.68px;width:400px;height:11.55px;font-size:10.5px;line-height:11.55px;color:#808080;transform:scaleX(0.78)">175</div>
<div class="t" style="left:381.00px;top:652.68px;width:400px;height:11.55px;font-size:10.5px;line-height:11.55px;color:#808080;transform:scaleX(0.78)">200</div>
<div class="t" style="left:435.50px;top:652.68px;width:400px;height:11.55px;font-size:10.5px;line-height:11.55px;color:#808080;transform:scaleX(0.78)">0.25</div>
<div class="t" style="left:504.50px;top:652.68px;width:400px;height:11.55px;font-size:10.5px;line-height:11.55px;color:#808080;transform:scaleX(0.78)">0.2</div>
<div style="left:46px;top:672px;width:1px;height:128px;background:#e2e2e2"></div>
<div style="left:289px;top:672px;width:1px;height:128px;background:#e2e2e2"></div>
<div style="left:448px;top:672px;width:1px;height:128px;background:#e2e2e2"></div>
<div style="left:500px;top:672px;width:1px;height:128px;background:#e2e2e2"></div>
<div style="left:553px;top:672px;width:1px;height:128px;background:#e2e2e2"></div>
<div style="left:609px;top:672px;width:1px;height:128px;background:#e2e2e2"></div>
<div style="left:662px;top:672px;width:1px;height:128px;background:#e2e2e2"></div>
<div style="left:747px;top:672px;width:1px;height:128px;background:#e2e2e2"></div>
<div style="left:46px;top:704px;width:701px;height:1px;background:#e2e2e2"></div>
<div style="left:46px;top:736px;width:701px;height:1px;background:#e2e2e2"></div>
<div style="left:46px;top:767px;width:701px;height:1px;background:#e2e2e2"></div>
<div class="t" style="left:-176.00px;top:732.48px;width:400px;height:11.55px;font-size:10.5px;line-height:11.55px;color:#6e6eb6;transform:scaleX(0.77);text-decoration:underline">59150</div>
<div class="t" style="left:571.00px;top:731.68px;width:400px;height:11.55px;font-size:10.5px;line-height:11.55px;color:#808080;transform:scaleX(0.78)">57150</div>
<div class="t" style="left:-32.50px;top:683.93px;width:400px;height:11.55px;font-size:10.5px;line-height:11.55px;color:#808080;transform:scaleX(0.795)">Flange Mount Sensor, Normally Open</div>
<div class="t" style="left:168.50px;top:677.70px;width:400px;height:24.00px;font-size:10.5px;line-height:12px;color:#808080;transform:scaleX(0.77)">28.57 (1.125) × 19.05 (0.750) × 6.35<br>(0.250)</div>
<div class="t" style="left:274.00px;top:683.93px;width:400px;height:11.55px;font-size:10.5px;line-height:11.55px;color:#808080;transform:scaleX(0.78)">10</div>
<div class="t" style="left:326.50px;top:683.93px;width:400px;height:11.55px;font-size:10.5px;line-height:11.55px;color:#808080;transform:scaleX(0.78)">200</div>
<div class="t" style="left:381.00px;top:683.93px;width:400px;height:11.55px;font-size:10.5px;line-height:11.55px;color:#808080;transform:scaleX(0.78)">250</div>
<div class="t" style="left:435.50px;top:683.93px;width:400px;height:11.55px;font-size:10.5px;line-height:11.55px;color:#808080;transform:scaleX(0.78)">0.5</div>
<div class="t" style="left:504.50px;top:683.93px;width:400px;height:11.55px;font-size:10.5px;line-height:11.55px;color:#808080;transform:scaleX(0.78)">0.2</div>
<div class="t" style="left:-32.50px;top:715.68px;width:400px;height:11.55px;font-size:10.5px;line-height:11.55px;color:#808080;transform:scaleX(0.795)">Flange Mount Sensor, Normally Open High Voltage</div>
<div class="t" style="left:168.50px;top:709.45px;width:400px;height:24.00px;font-size:10.5px;line-height:12px;color:#808080;transform:scaleX(0.77)">28.57 (1.125) × 19.05 (0.750) × 6.35<br>(0.250)</div>
<div class="t" style="left:274.00px;top:715.68px;width:400px;height:11.55px;font-size:10.5px;line-height:11.55px;color:#808080;transform:scaleX(0.78)">10</div>
<div class="t" style="left:326.50px;top:715.68px;width:400px;height:11.55px;font-size:10.5px;line-height:11.55px;color:#808080;transform:scaleX(0.78)">300</div>
<div class="t" style="left:381.00px;top:715.68px;width:400px;height:11.55px;font-size:10.5px;line-height:11.55px;color:#808080;transform:scaleX(0.78)">450</div>
<div class="t" style="left:435.50px;top:715.68px;width:400px;height:11.55px;font-size:10.5px;line-height:11.55px;color:#808080;transform:scaleX(0.78)">0.5</div>
<div class="t" style="left:504.50px;top:715.68px;width:400px;height:11.55px;font-size:10.5px;line-height:11.55px;color:#808080;transform:scaleX(0.78)">0.2</div>
<div class="t" style="left:-32.50px;top:747.18px;width:400px;height:11.55px;font-size:10.5px;line-height:11.55px;color:#808080;transform:scaleX(0.795)">Flange Mount Sensor, Changeover</div>
<div class="t" style="left:168.50px;top:740.95px;width:400px;height:24.00px;font-size:10.5px;line-height:12px;color:#808080;transform:scaleX(0.77)">28.57 (1.125) × 19.05 (0.750) × 6.35<br>(0.250)</div>
<div class="t" style="left:274.00px;top:747.18px;width:400px;height:11.55px;font-size:10.5px;line-height:11.55px;color:#808080;transform:scaleX(0.78)">5</div>
<div class="t" style="left:326.50px;top:747.18px;width:400px;height:11.55px;font-size:10.5px;line-height:11.55px;color:#808080;transform:scaleX(0.78)">175</div>
<div class="t" style="left:381.00px;top:747.18px;width:400px;height:11.55px;font-size:10.5px;line-height:11.55px;color:#808080;transform:scaleX(0.78)">200</div>
<div class="t" style="left:435.50px;top:747.18px;width:400px;height:11.55px;font-size:10.5px;line-height:11.55px;color:#808080;transform:scaleX(0.78)">0.25</div>
<div class="t" style="left:504.50px;top:747.18px;width:400px;height:11.55px;font-size:10.5px;line-height:11.55px;color:#808080;transform:scaleX(0.78)">0.2</div>
<div class="t" style="left:-32.50px;top:779.18px;width:400px;height:11.55px;font-size:10.5px;line-height:11.55px;color:#808080;transform:scaleX(0.795)">Flange Mount Sensor, Normally Closed</div>
<div class="t" style="left:168.50px;top:772.95px;width:400px;height:24.00px;font-size:10.5px;line-height:12px;color:#808080;transform:scaleX(0.77)">28.57 (1.125) × 19.05 (0.750) × 6.35<br>(0.250)</div>
<div class="t" style="left:274.00px;top:779.18px;width:400px;height:11.55px;font-size:10.5px;line-height:11.55px;color:#808080;transform:scaleX(0.78)">5</div>
<div class="t" style="left:326.50px;top:779.18px;width:400px;height:11.55px;font-size:10.5px;line-height:11.55px;color:#808080;transform:scaleX(0.78)">175</div>
<div class="t" style="left:381.00px;top:779.18px;width:400px;height:11.55px;font-size:10.5px;line-height:11.55px;color:#808080;transform:scaleX(0.78)">200</div>
<div class="t" style="left:435.50px;top:779.18px;width:400px;height:11.55px;font-size:10.5px;line-height:11.55px;color:#808080;transform:scaleX(0.78)">0.25</div>
<div class="t" style="left:504.50px;top:779.18px;width:400px;height:11.55px;font-size:10.5px;line-height:11.55px;color:#808080;transform:scaleX(0.78)">0.2</div>
<div style="left:2px;top:470px;width:791px;height:1px;background:#e2e2e2"></div>
</body></html>
